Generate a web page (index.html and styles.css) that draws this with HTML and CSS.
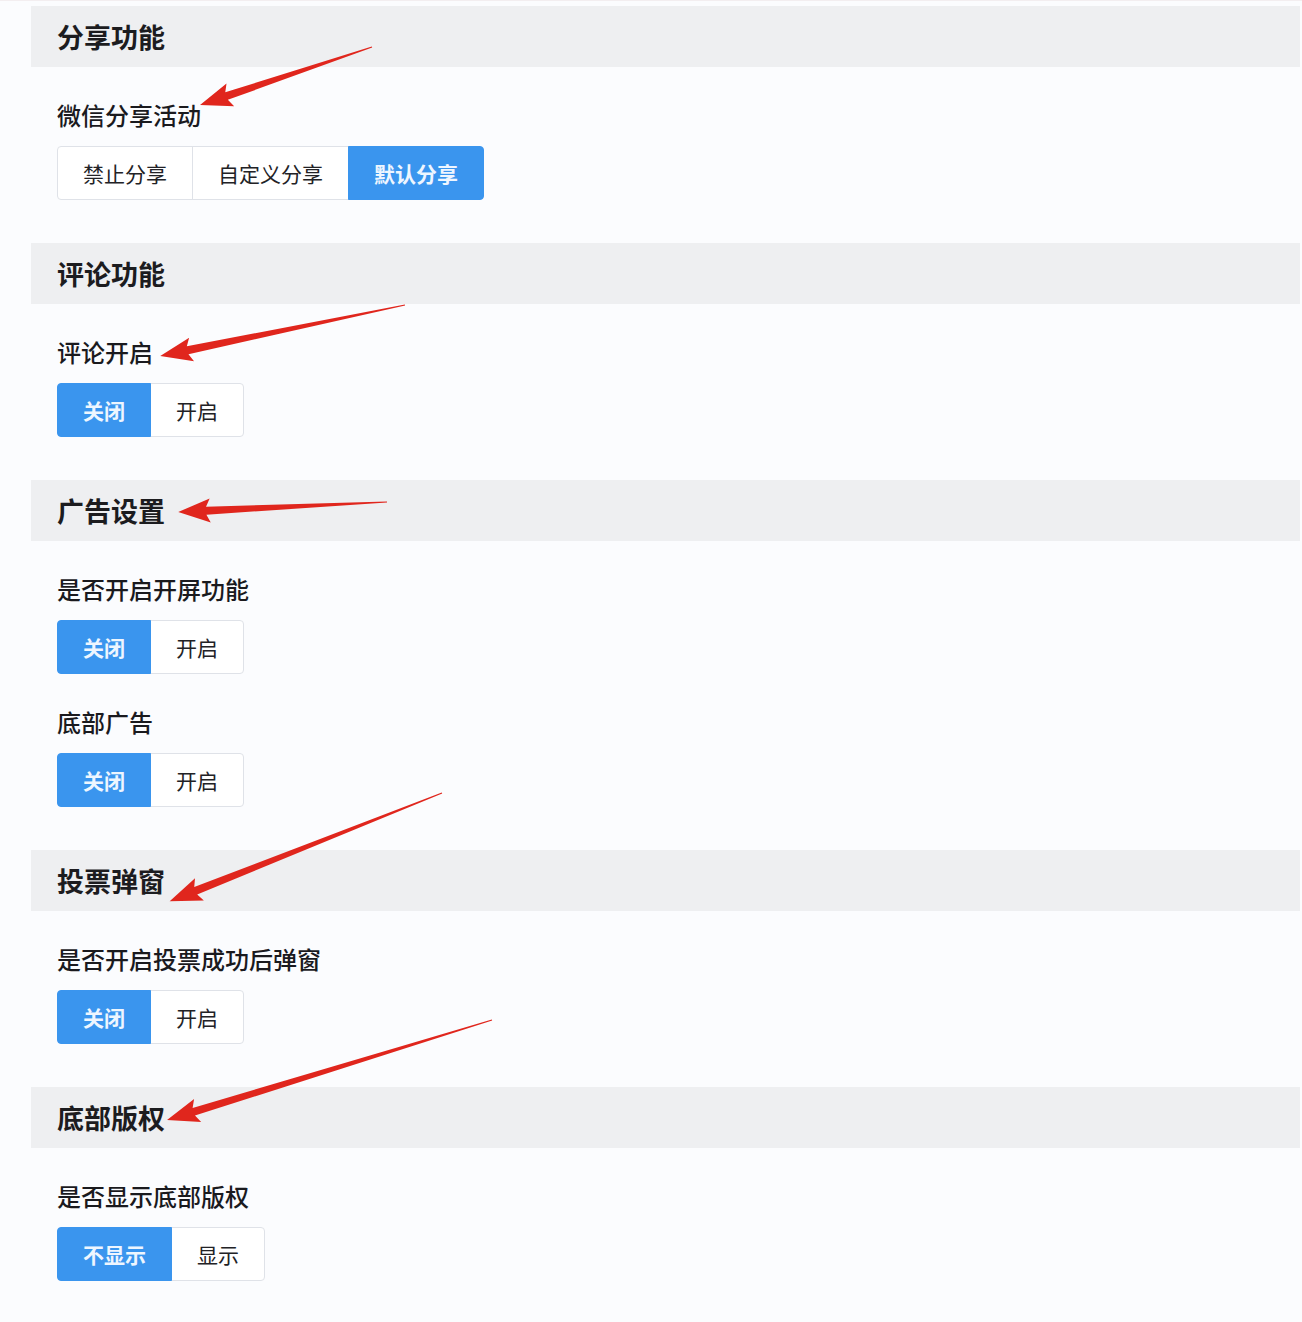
FILE: index.html
```html
<!DOCTYPE html>
<html lang="zh-CN">
<head>
<meta charset="utf-8">
<title>设置</title>
<link rel="stylesheet" href="styles.css">
</head>
<body>
<div class="panel">
  <section class="section">
    <div class="section-head">分享功能</div>
    <div class="section-body">
      <div class="field">
        <div class="label">微信分享活动</div>
        <div class="btn-group">
          <span class="btn">禁止分享</span><span class="btn">自定义分享</span><span class="btn active">默认分享</span>
        </div>
      </div>
    </div>
  </section>
  <section class="section">
    <div class="section-head">评论功能</div>
    <div class="section-body">
      <div class="field">
        <div class="label">评论开启</div>
        <div class="btn-group">
          <span class="btn active">关闭</span><span class="btn">开启</span>
        </div>
      </div>
    </div>
  </section>
  <section class="section">
    <div class="section-head">广告设置</div>
    <div class="section-body">
      <div class="field">
        <div class="label">是否开启开屏功能</div>
        <div class="btn-group">
          <span class="btn active">关闭</span><span class="btn">开启</span>
        </div>
      </div>
      <div class="field">
        <div class="label">底部广告</div>
        <div class="btn-group">
          <span class="btn active">关闭</span><span class="btn">开启</span>
        </div>
      </div>
    </div>
  </section>
  <section class="section">
    <div class="section-head">投票弹窗</div>
    <div class="section-body">
      <div class="field">
        <div class="label">是否开启投票成功后弹窗</div>
        <div class="btn-group">
          <span class="btn active">关闭</span><span class="btn">开启</span>
        </div>
      </div>
    </div>
  </section>
  <section class="section">
    <div class="section-head">底部版权</div>
    <div class="section-body">
      <div class="field">
        <div class="label">是否显示底部版权</div>
        <div class="btn-group">
          <span class="btn active">不显示</span><span class="btn">显示</span>
        </div>
      </div>
    </div>
  </section>
</div>
<svg class="arrows" width="1302" height="1322" viewBox="0 0 1302 1322" xmlns="http://www.w3.org/2000/svg">
  <g fill="#e0261d">
    <polygon transform="translate(372,47) rotate(161.36)" points="0,-0.6 153.5,-4 149.5,-12 181.5,0 149.5,12 153.5,4 0,0.6"/>
    <polygon transform="translate(405,305) rotate(168.24)" points="0,-0.6 222,-4 218,-12 250,0 218,12 222,4 0,0.6"/>
    <polygon transform="translate(387,502) rotate(177.26)" points="0,-0.6 181,-4 177,-12 209,0 177,12 181,4 0,0.6"/>
    <polygon transform="translate(442,793) rotate(158.34)" points="0,-0.6 265,-4 261,-12 293,0 261,12 265,4 0,0.6"/>
    <polygon transform="translate(492,1020) rotate(162.9)" points="0,-0.6 312,-4 308,-12 340,0 308,12 312,4 0,0.6"/>
  </g>
</svg>
</body>
</html>
```

FILE: styles.css
```css
html, body {
  margin: 0;
  padding: 0;
}
body {
  background: #fbfcfe;
  font-family: "Noto Sans CJK SC", "Noto Sans", sans-serif;
  color: #1f1f22;
  position: relative;
  width: 1302px;
  height: 1322px;
  overflow: hidden;
}
.panel {
  padding: 5px 2px 0 31px;
  border-top: 1px solid #f3eef0;
}
.section-head {
  height: 61px;
  background: #eeeff1;
  display: flex;
  align-items: center;
  padding-left: 26px;
  font-size: 27px;
  font-weight: 700;
  color: #1c1c1f;
}
.section-body {
  padding: 32px 0 43px 26px;
  display: flex;
  flex-direction: column;
  gap: 32px;
}
.label {
  font-size: 24px;
  line-height: 32px;
  font-weight: 500;
  color: #1a1a1e;
  margin-bottom: 15px;
}
.btn-group {
  display: flex;
}
.btn {
  height: 54px;
  box-sizing: border-box;
  padding: 0 25px;
  display: flex;
  align-items: center;
  justify-content: center;
  font-size: 21px;
  color: #222226;
  background: #ffffff;
  border: 1px solid #dfe2e8;
  margin-left: -1px;
}
.btn:first-child {
  margin-left: 0;
  border-radius: 4px 0 0 4px;
}
.btn:last-child {
  border-radius: 0 4px 4px 0;
}
.btn.active {
  background: #3a95ee;
  border-color: #3a95ee;
  color: #eef6ff;
  font-weight: 700;
  position: relative;
}
.arrows {
  position: absolute;
  top: 0;
  left: 0;
  pointer-events: none;
}
```
